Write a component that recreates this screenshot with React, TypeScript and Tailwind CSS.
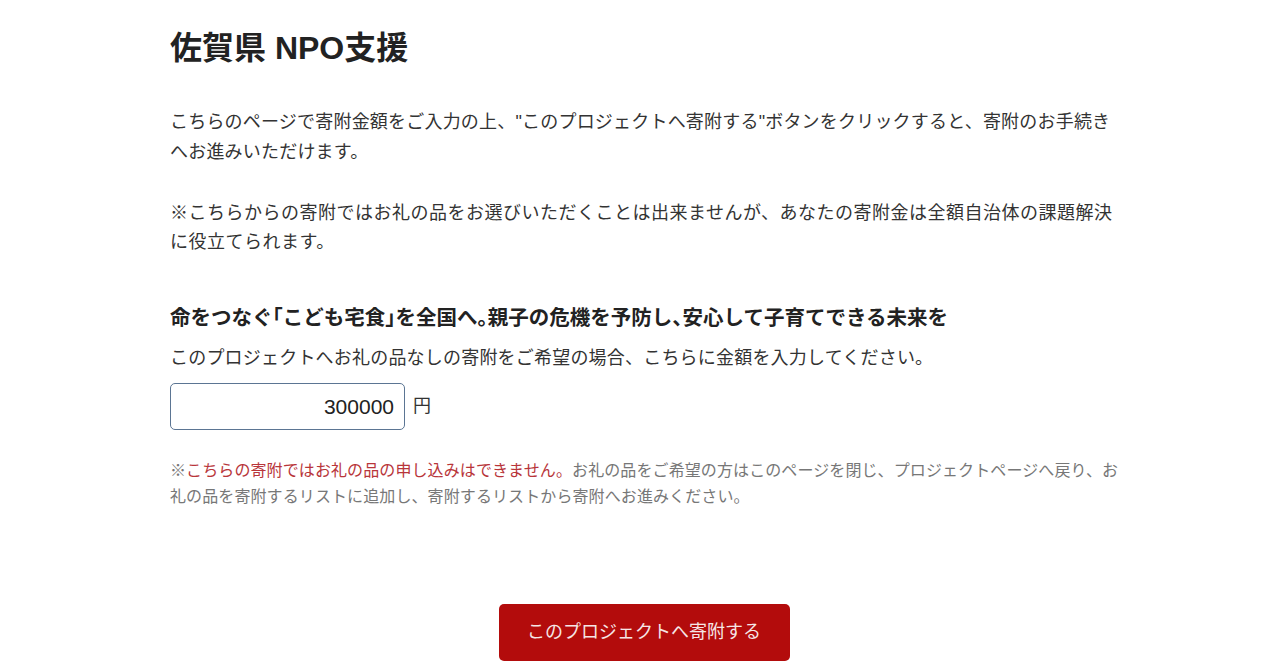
import React, { useState } from 'react';

const project = {
  prefecture: '佐賀県 NPO支援',
  title: '命をつなぐ「こども宅食」を全国へ。親子の危機を予防し、安心して子育てできる未来を',
};

function App() {
  const [amount, setAmount] = useState('300000');

  return (
    <div className="min-h-screen bg-white font-['Liberation_Sans','Noto_Sans_CJK_JP',sans-serif] text-[#333]">
      <div className="ml-[170px] w-[952px] pt-[28px]">
        {/* Header */}
        <h1 className="text-[32px] leading-[40px] font-bold text-[#222]">{project.prefecture}</h1>

        {/* Intro */}
        <p className="mt-[39px] text-[18px] leading-[30px] tracking-[0.2px]">
          こちらのページで寄附金額をご入力の上、"このプロジェクトへ寄附する"ボタンをクリックすると、寄附のお手続きへお進みいただけます。
        </p>
        <p className="mt-[32px] text-[18px] leading-[29px] tracking-[0.5px]">
          ※こちらからの寄附ではお礼の品をお選びいただくことは出来ませんが、あなたの寄附金は全額自治体の課題解決に役立てられます。
        </p>

        {/* Project */}
        <h2 className="mt-[46px] text-[20.5px] leading-[30px] font-bold text-[#222] [font-feature-settings:'halt']">
          {project.title}
        </h2>
        <p className="mt-[11px] text-[18px] leading-[28px] tracking-[0.2px]">
          このプロジェクトへお礼の品なしの寄附をご希望の場合、こちらに金額を入力してください。
        </p>

        <div className="mt-[11px] flex items-center gap-[8px]">
          <input
            type="text"
            value={amount}
            onChange={(e) => setAmount(e.target.value)}
            className="w-[235px] h-[47px] rounded-[5px] border border-[#5b7593] px-[10px] text-right text-[21px] text-[#222] outline-none"
          />
          <span className="text-[18px]">円</span>
        </div>

        <p className="mt-[28px] text-[16px] leading-[26px] tracking-[0.1px] text-[#777]">
          ※<span className="text-[#b8353a]">こちらの寄附ではお礼の品の申し込みはできません。</span>お礼の品をご希望の方はこのページを閉じ、プロジェクトページへ戻り、お礼の品を寄附するリストに追加し、寄附するリストから寄附へお進みください。
        </p>

        {/* Submit */}
        <div className="mt-[94px] flex justify-center pr-[4px]">
          <button className="w-[291px] h-[57px] rounded-[5px] bg-[#b30c0c] text-[18px] text-[#f6e6e6]">
            このプロジェクトへ寄附する
          </button>
        </div>
      </div>
    </div>
  );
}

export default App;
